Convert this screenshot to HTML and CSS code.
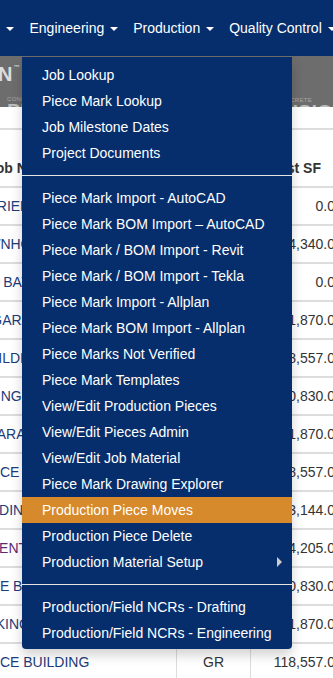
FILE: index.html
```html
<!DOCTYPE html>
<html>
<head>
<meta charset="utf-8">
<link rel="stylesheet" href="styles.css">
</head>
<body>
<nav class="navbar">
  <div class="nav-item nav-first"><span class="caret"></span></div>
  <div class="nav-item">Engineering<span class="caret"></span></div>
  <div class="nav-item">Production<span class="caret"></span></div>
  <div class="nav-item">Quality Control<span class="caret"></span></div>
</nav>
<div class="banner">
  <div class="logo logo-left">
    <div class="logo-word">N<span class="tm">™</span></div>
    <div class="logo-small">CONCRETE SYSTEMS</div>
    <div class="logo-bold">PRECAST</div>
  </div>
  <div class="logo logo-right">
    <div class="logo-small">CONCRETE</div>
    <div class="logo-bold">PRECISION</div>
  </div>
</div>
<div class="gap"></div>
<div class="table">
  <div class="row head">
    <div class="cell name">Job Name</div>
    <div class="cell code">Grade</div>
    <div class="cell num">Est SF</div>
  </div>
  <div class="row"><div class="cell name link">BARRIER WALL</div><div class="cell code">GR</div><div class="cell num">0.0</div></div>
  <div class="row"><div class="cell name link">TOWNHOMES</div><div class="cell code">GR</div><div class="cell num">34,340.0</div></div>
  <div class="row"><div class="cell name link">OWL BAY LOFTS</div><div class="cell code">GR</div><div class="cell num">0.0</div></div>
  <div class="row"><div class="cell name link">NIAGARA FALLS</div><div class="cell code">GR</div><div class="cell num">41,870.0</div></div>
  <div class="row"><div class="cell name link">J BUILDING</div><div class="cell code">GR</div><div class="cell num">118,557.0</div></div>
  <div class="row"><div class="cell name link">SPRING - PHASE 2</div><div class="cell code">GR</div><div class="cell num">20,830.0</div></div>
  <div class="row"><div class="cell name link">SAHARA PLAZA</div><div class="cell code">GR</div><div class="cell num">41,870.0</div></div>
  <div class="row"><div class="cell name link">OFFICE IMPROVEMENTS</div><div class="cell code">GR</div><div class="cell num">118,557.0</div></div>
  <div class="row"><div class="cell name link">BUILDING C</div><div class="cell code">GR</div><div class="cell num">23,144.0</div></div>
  <div class="row"><div class="cell name link visited">CEMENT PLANT</div><div class="cell code">GR</div><div class="cell num">14,205.0</div></div>
  <div class="row"><div class="cell name link">SUITE BUILDING</div><div class="cell code">GR</div><div class="cell num">20,830.0</div></div>
  <div class="row"><div class="cell name link">PARKING DECK</div><div class="cell code">GR</div><div class="cell num">41,870.0</div></div>
  <div class="row"><div class="cell name link">OFFICE BUILDING</div><div class="cell code">GR</div><div class="cell num">118,557.0</div></div>
</div>
<ul class="menu">
  <li class="menu-item">Job Lookup</li>
  <li class="menu-item">Piece Mark Lookup</li>
  <li class="menu-item">Job Milestone Dates</li>
  <li class="menu-item">Project Documents</li>
  <li class="divider"></li>
  <li class="menu-item">Piece Mark Import - AutoCAD</li>
  <li class="menu-item">Piece Mark BOM Import – AutoCAD</li>
  <li class="menu-item">Piece Mark / BOM Import - Revit</li>
  <li class="menu-item">Piece Mark / BOM Import - Tekla</li>
  <li class="menu-item">Piece Mark Import - Allplan</li>
  <li class="menu-item">Piece Mark BOM Import - Allplan</li>
  <li class="menu-item">Piece Marks Not Verified</li>
  <li class="menu-item">Piece Mark Templates</li>
  <li class="menu-item">View/Edit Production Pieces</li>
  <li class="menu-item">View/Edit Pieces Admin</li>
  <li class="menu-item">View/Edit Job Material</li>
  <li class="menu-item">Piece Mark Drawing Explorer</li>
  <li class="menu-item active">Production Piece Moves</li>
  <li class="menu-item">Production Piece Delete</li>
  <li class="menu-item">Production Material Setup<span class="sub-arrow"></span></li>
  <li class="divider"></li>
  <li class="menu-item">Production/Field NCRs - Drafting</li>
  <li class="menu-item">Production/Field NCRs - Engineering</li>
</ul>
</body>
</html>
```
FILE: styles.css
```css
* { box-sizing: border-box; }
html, body { margin: 0; padding: 0; }
body {
  width: 333px;
  height: 678px;
  overflow: hidden;
  position: relative;
  font-family: "Liberation Sans", Arial, sans-serif;
  font-size: 14px;
  color: #333;
  background: #fff;
}

/* top navigation */
.navbar {
  height: 56px;
  background: #062e6c;
  display: flex;
  align-items: center;
  white-space: nowrap;
  overflow: hidden;
  color: #fff;
}
.nav-item {
  display: flex;
  align-items: center;
  padding: 0 7.5px;
  line-height: 20px;
  flex: none;
}
.nav-first { padding-left: 6px; padding-right: 8px; }
.caret {
  display: inline-block;
  width: 0;
  height: 0;
  border-top: 4px solid #fff;
  border-left: 4px solid transparent;
  border-right: 4px solid transparent;
  margin-left: 6px;
  margin-top: 2px;
}
.nav-first .caret { margin-left: 0; }

/* banner with logos */
.banner {
  height: 51px;
  background: #6d6d6d;
  display: flex;
  justify-content: space-between;
  overflow: hidden;
  white-space: nowrap;
}
.logo { display: flex; flex-direction: column; flex: none; }
.logo-left { margin-left: -2px; padding-top: 7px; }
.logo-word {
  font-weight: bold;
  font-size: 20px;
  line-height: 22px;
  color: #dcdcdc;
  height: 22px;
}
.tm {
  font-size: 6px;
  vertical-align: top;
  line-height: 8px;
  margin-left: 1px;
}
.logo-small {
  font-size: 6px;
  line-height: 7px;
  color: #a8a8a8;
  letter-spacing: 0.3px;
}
.logo-left .logo-small { margin-top: 11px; padding-left: 9px; }
.logo-bold {
  font-weight: bold;
  font-size: 20px;
  line-height: 18px;
  color: #bdbdbd;
  margin-top: -1px;
}
.logo-left .logo-bold { padding-left: 9px; }
.logo-right {
  margin-right: -14px;
  padding-top: 41px;
  align-items: flex-end;
}
.logo-right .logo-small { padding-right: 35px; }

.gap { height: 21px; }

/* table */
.table {
  margin-left: -40px;
  width: 380px;
}
.row {
  display: grid;
  grid-template-columns: 216px 74px 90px;
  height: 38px;
  border-top: 2px solid #ddd;
}
.row.head { height: 58px; }
.cell {
  display: flex;
  align-items: center;
  padding: 0 8px;
  white-space: nowrap;
  overflow: hidden;
  line-height: 20px;
}
.code { justify-content: center; border-left: 1px solid #ddd; }
.num { justify-content: flex-end; border-left: 1px solid #ddd; padding-right: 5px; }
.head .cell {
  align-items: flex-end;
  padding-bottom: 8px;
  font-weight: bold;
  color: #333;
}
.head .name { padding-left: 28px; }
.head .num { padding-right: 19px; }
.link { color: #1c3c7a; }
.visited { color: #5b2a76; }

/* dropdown menu */
.menu {
  position: absolute;
  top: 57px;
  left: 22px;
  width: 270px;
  margin: 0;
  padding: 5px 0 3px;
  list-style: none;
  background: #062e6c;
  border-radius: 0 0 4px 4px;
  box-shadow: 0 6px 12px rgba(0, 0, 0, 0.18);
}
.menu-item {
  display: flex;
  justify-content: space-between;
  align-items: center;
  padding: 3px 20px;
  line-height: 20px;
  color: #fff;
  white-space: nowrap;
}
.menu-item.active { background: #d68a2b; }
.divider {
  height: 1px;
  margin: 9px 0;
  background: #e5e5e5;
}
.sub-arrow {
  width: 0;
  height: 0;
  border-left: 5px solid #ccc;
  border-top: 5px solid transparent;
  border-bottom: 5px solid transparent;
  margin-right: -10px;
}
```
